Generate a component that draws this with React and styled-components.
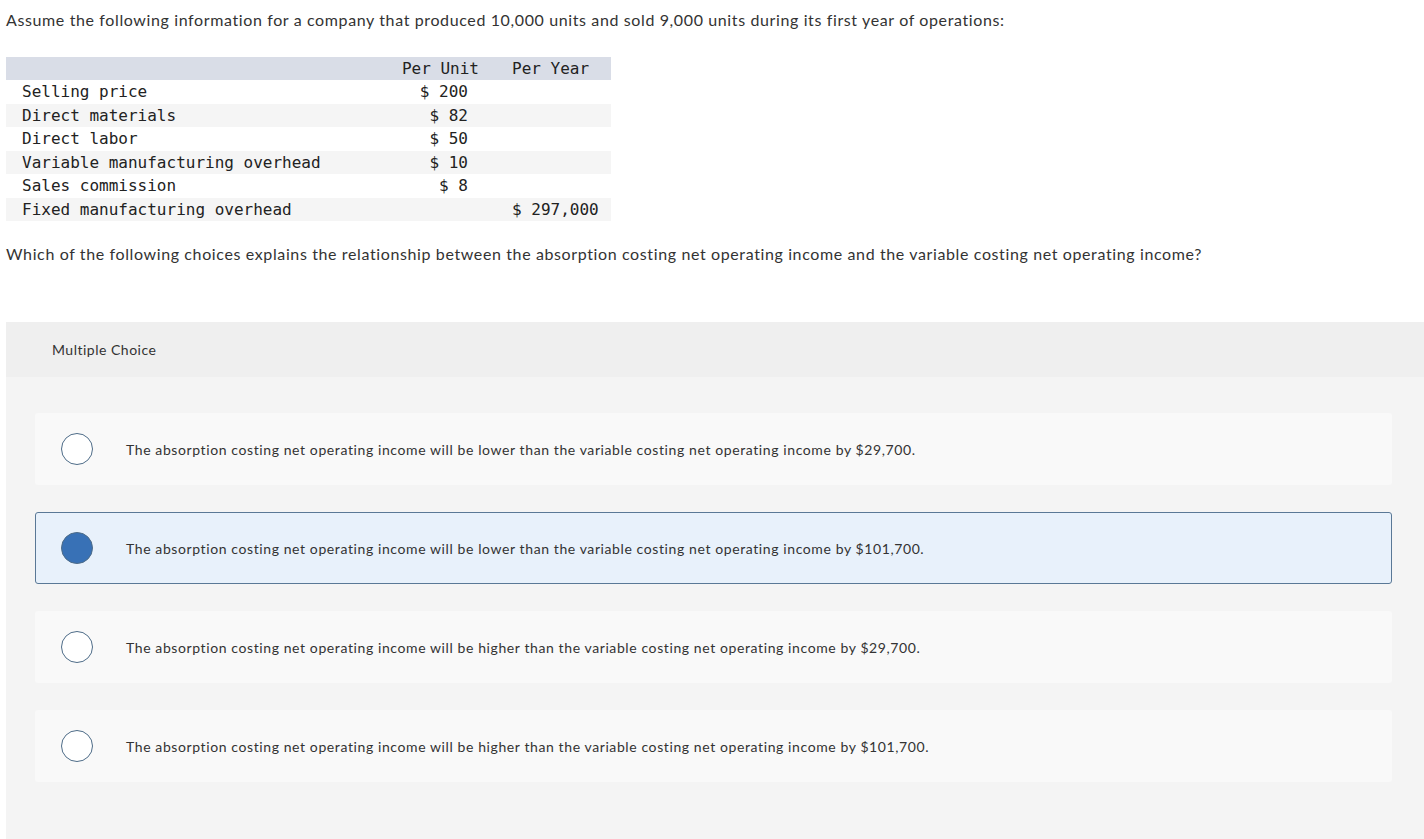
import React from 'react';
import styled, { createGlobalStyle } from 'styled-components';

const GlobalStyle = createGlobalStyle`
  body {
    margin: 0;
    background: #fff;
    font-family: Lato, "Open Sans", Arial, sans-serif;
    color: #333;
  }
`;

const Page = styled.div`
  padding: 10px 0 0 6px;
`;

const Intro = styled.p`
  margin: 0;
  font-size: 16px;
  line-height: 20px;
  letter-spacing: 0.62px;
  color: #333;
`;

const Table = styled.table`
  margin-top: 27px;
  width: 605px;
  table-layout: fixed;
  border-collapse: collapse;
  font-family: "DejaVu Sans Mono", "Liberation Mono", monospace;
  font-size: 16px;
  color: #222;
`;

const HeadRow = styled.tr`
  background: #d9dde7;
  height: 23px;
`;

const Row = styled.tr`
  background: ${p => (p.$striped ? '#f5f5f5' : '#fff')};
  height: 23.5px;
`;

const Cell = styled.td`
  padding: 0;
  padding-left: ${p => p.$pl || 0}px;
  padding-right: ${p => p.$pr || 0}px;
  text-align: ${p => p.$align || 'left'};
  white-space: pre;
  line-height: 23px;
`;

const Question = styled.p`
  margin: 23px 0 0;
  font-size: 16px;
  line-height: 20px;
  letter-spacing: 0.62px;
  color: #333;
`;

const Panel = styled.div`
  margin-top: 58px;
  background: #f4f4f4;
  padding-bottom: 60px;
`;

const PanelHead = styled.div`
  background: #efefef;
  height: 55px;
  display: flex;
  align-items: center;
  padding-left: 46px;
  font-size: 14px;
  letter-spacing: 0.5px;
  color: #333;
`;

const Options = styled.div`
  display: flex;
  flex-direction: column;
  gap: 27px;
  padding: 36px 32px 0 29px;
`;

const Option = styled.div`
  height: 72px;
  box-sizing: border-box;
  display: flex;
  align-items: center;
  background: ${p => (p.$selected ? '#e8f1fb' : '#f9f9f9')};
  border: 1px solid ${p => (p.$selected ? '#5a7896' : 'transparent')};
  border-radius: 3px;
  padding-left: 25px;
  font-size: 14px;
  letter-spacing: 0.6px;
  color: #333;
`;

const Radio = styled.span`
  width: 30px;
  height: 30px;
  border-radius: 50%;
  border: 1px solid #4e6c88;
  background: ${p => (p.$selected ? '#3871b6' : '#fff')};
  flex-shrink: 0;
  margin-right: 33px;
`;

const rows = [
  ['Selling price', '$ 200', ''],
  ['Direct materials', '$ 82', ''],
  ['Direct labor', '$ 50', ''],
  ['Variable manufacturing overhead', '$ 10', ''],
  ['Sales commission', '$ 8', ''],
  ['Fixed manufacturing overhead', '', '$ 297,000'],
];

const choices = [
  'The absorption costing net operating income will be lower than the variable costing net operating income by $29,700.',
  'The absorption costing net operating income will be lower than the variable costing net operating income by $101,700.',
  'The absorption costing net operating income will be higher than the variable costing net operating income by $29,700.',
  'The absorption costing net operating income will be higher than the variable costing net operating income by $101,700.',
];

export default function App() {
  return (
    <Page>
      <GlobalStyle />
      <Intro>
        Assume the following information for a company that produced 10,000 units and sold 9,000 units during its first year of operations:
      </Intro>
      <Table>
        <colgroup>
          <col style={{ width: 394 }} />
          <col style={{ width: 90 }} />
          <col style={{ width: 121 }} />
        </colgroup>
        <tbody>
          <HeadRow>
            <Cell />
            <Cell $align="right" $pr={11}>Per Unit</Cell>
            <Cell $pl={22}>Per Year</Cell>
          </HeadRow>
          {rows.map((r, i) => (
            <Row key={r[0]} $striped={i % 2 === 1}>
              <Cell $pl={16}>{r[0]}</Cell>
              <Cell $align="right" $pr={22}>{r[1]}</Cell>
              <Cell $pl={22}>{r[2]}</Cell>
            </Row>
          ))}
        </tbody>
      </Table>
      <Question>
        Which of the following choices explains the relationship between the absorption costing net operating income and the variable costing net operating income?
      </Question>
      <Panel>
        <PanelHead>Multiple Choice</PanelHead>
        <Options>
          {choices.map((c, i) => (
            <Option key={c} $selected={i === 1}>
              <Radio $selected={i === 1} />
              {c}
            </Option>
          ))}
        </Options>
      </Panel>
    </Page>
  );
}
